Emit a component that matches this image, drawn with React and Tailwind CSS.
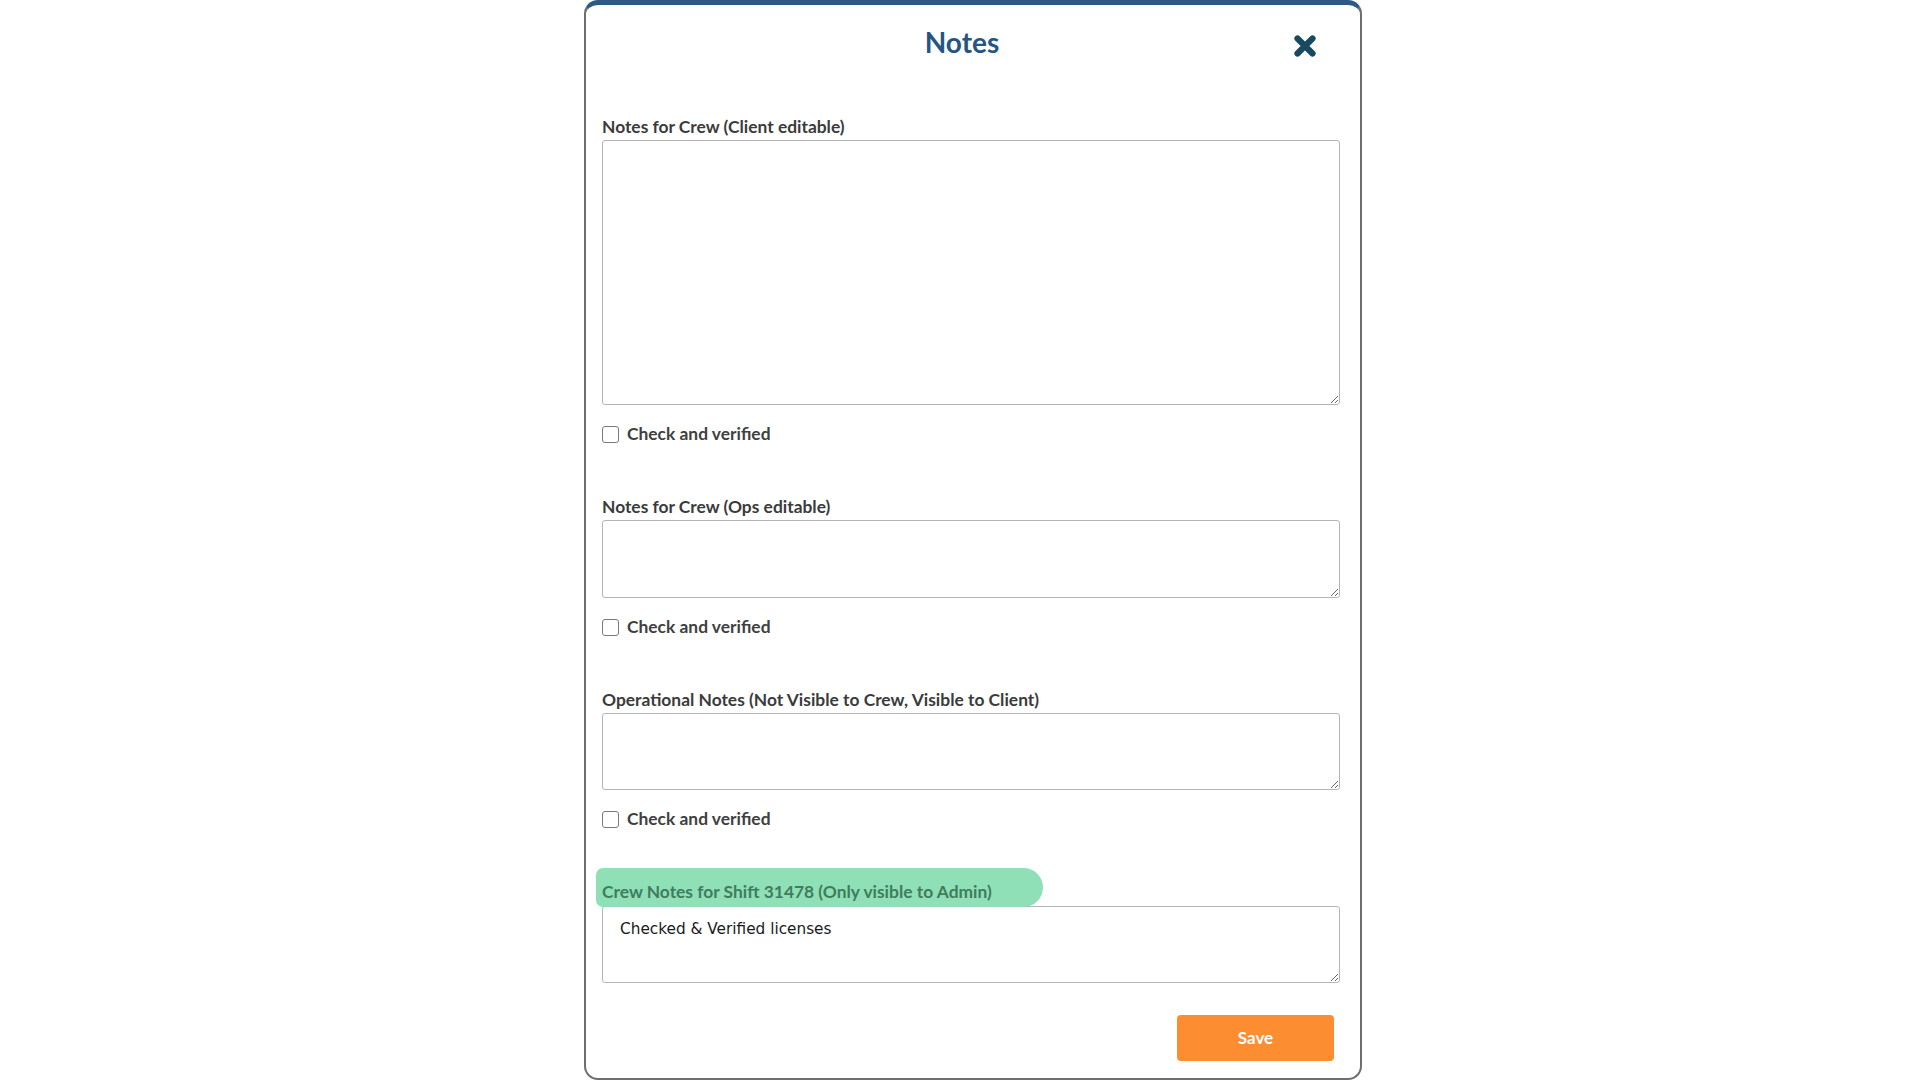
import { useState } from "react";

// Notes modal with three editable note fields and an admin-only crew note
function CheckRow({ id }) {
  const [checked, setChecked] = useState(false);
  return (
    <label
      htmlFor={id}
      className="mt-[19px] flex items-center gap-[8px] h-[20px] cursor-pointer"
    >
      <input
        id={id}
        type="checkbox"
        checked={checked}
        onChange={() => setChecked(!checked)}
        className="appearance-none w-[17px] h-[17px] rounded-[3px] border border-[#7a7a7a] bg-white checked:bg-[#2b5a84]"
      />
      <span className="text-[17.4px] leading-[20px] font-bold text-[#404040]">
        Check and verified
      </span>
    </label>
  );
}

function Field({ label, height, value, id }) {
  return (
    <div>
      <div className="text-[17.4px] leading-[20px] font-bold text-[#3b3b3b] mb-[3px]">
        {label}
      </div>
      <textarea
        defaultValue={value}
        className="block w-full border border-[#b5b5b5] rounded-[3px] bg-white outline-none"
        style={{ height }}
      />
      <CheckRow id={id} />
    </div>
  );
}

export default function App() {
  return (
    <div
      className="min-h-screen bg-white flex justify-center pl-[26px]"
      style={{ fontFamily: "Lato, 'Open Sans', sans-serif" }}
    >
      <div className="w-[778px] h-[1080px] border-2 border-[#6e6e6e] border-t-[5px] border-t-[#2c5a84] rounded-[14px] bg-white px-[16px] flex flex-col">
        {/* Header */}
        <div className="relative pt-[20px] flex justify-center pr-[22px]">
          <h1 className="text-[28px] leading-[34px] font-bold text-[#245683]">
            Notes
          </h1>
          <button className="absolute right-[26px] top-[28px] w-[26px] h-[26px] flex items-center justify-center">
            <svg width="24" height="24" viewBox="0 0 24 24">
              <path
                d="M4.5 4.5 L19.5 19.5 M19.5 4.5 L4.5 19.5"
                stroke="#174a60"
                strokeWidth="6.2"
                strokeLinecap="round"
              />
            </svg>
          </button>
        </div>

        <div className="mt-[58px] pr-[4px]">
          <Field label="Notes for Crew (Client editable)" height={265} id="c1" />
        </div>

        <div className="mt-[53px] pr-[4px]">
          <Field label="Notes for Crew (Ops editable)" height={78} id="c2" />
        </div>

        <div className="mt-[53px] pr-[4px]">
          <Field
            label="Operational Notes (Not Visible to Crew, Visible to Client)"
            height={77}
            id="c3"
          />
        </div>

        {/* Admin crew notes */}
        <div className="mt-[39px] pr-[4px]">
          <div className="h-[38px] flex">
            <span className="-ml-[6px] pl-[6px] w-[447px] h-[39px] pt-[14px] bg-[#8fdfb7] rounded-l-[8px] rounded-r-[22px] text-[17.4px] leading-[20px] font-bold text-[#3f7d5d]">
              Crew Notes for Shift 31478 (Only visible to Admin)
            </span>
          </div>
          <textarea
            defaultValue="Checked & Verified licenses"
            className="block w-full h-[77px] border border-[#b5b5b5] rounded-[3px] bg-white outline-none px-[17px] pt-[12px] text-[15.3px] leading-[20px] text-[#1a1a1a]"
            style={{ fontFamily: "'DejaVu Sans', Verdana, sans-serif" }}
          />
        </div>

        <div className="mt-[32px] flex justify-end pr-[10px]">
          <button className="w-[157px] h-[46px] rounded-[4px] bg-[#fd8d31] text-white text-[17px] font-bold">
            Save
          </button>
        </div>
      </div>
    </div>
  );
}
